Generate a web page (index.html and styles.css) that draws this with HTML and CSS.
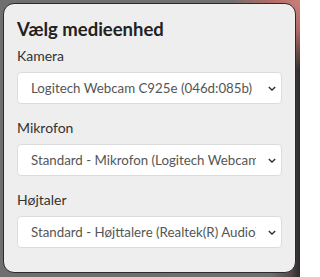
FILE: index.html
```html
<!DOCTYPE html>
<html lang="da">
<head>
<meta charset="utf-8">
<link rel="stylesheet" href="styles.css">
</head>
<body>
<div class="backdrop">
  <div class="dialog">
    <h1 class="title">Vælg medieenhed</h1>
    <div class="field">
      <label class="label">Kamera</label>
      <div class="select"><span class="value">Logitech Webcam C925e (046d:085b)</span><svg class="chev" viewBox="0 0 10 6" width="8" height="5"><path d="M1 1l4 4 4-4" fill="none" stroke="#333" stroke-width="1.7"/></svg></div>
    </div>
    <div class="field">
      <label class="label">Mikrofon</label>
      <div class="select"><span class="value">Standard - Mikrofon (Logitech Webcam C925e)</span><svg class="chev" viewBox="0 0 10 6" width="8" height="5"><path d="M1 1l4 4 4-4" fill="none" stroke="#333" stroke-width="1.7"/></svg></div>
    </div>
    <div class="field">
      <label class="label">Højtaler</label>
      <div class="select"><span class="value">Standard - Højttalere (Realtek(R) Audio)</span><svg class="chev" viewBox="0 0 10 6" width="8" height="5"><path d="M1 1l4 4 4-4" fill="none" stroke="#333" stroke-width="1.7"/></svg></div>
    </div>
  </div>
</div>
</body>
</html>
```
FILE: styles.css
```css
html, body { margin: 0; padding: 0; }
body {
  font-family: Lato, "Noto Sans", sans-serif;
  width: 300px;
  height: 277px;
  overflow: hidden;
}
.backdrop {
  width: 300px;
  height: 277px;
  box-sizing: border-box;
  padding: 3px 4px 4px 3px;
  background:
    radial-gradient(circle at 100% 0%, #c9807a 0, #b06a66 30px, rgba(120,110,110,0) 70px),
    linear-gradient(90deg, #6f6f6f 0, #707070 270px, #5a4a4a 290px, #2a2a2a 300px);
}
.dialog {
  box-sizing: border-box;
  height: 270px;
  background: #eeeeee;
  border: 1px solid #2b2b2b;
  border-radius: 11px;
  padding: 13px 13px 0 13px;
}
.title {
  margin: 0 0 6px 0;
  font-size: 18.5px;
  font-weight: 700;
  color: #222;
  line-height: 24px;
}
.label {
  display: block;
  font-size: 14px;
  color: #333;
  line-height: 18px;
  margin-bottom: 7px;
}
.select {
  box-sizing: border-box;
  display: flex;
  align-items: center;
  height: 32px;
  background: #fff;
  border: 1px solid #dcdcdc;
  border-radius: 4px;
  padding: 0 5px 0 13px;
  margin-bottom: 15px;
}
.value {
  flex: 1;
  min-width: 0;
  white-space: nowrap;
  overflow: hidden;
  font-size: 13.3px;
  color: #555;
}
.chev { flex: none; margin-left: 12px; }
```
